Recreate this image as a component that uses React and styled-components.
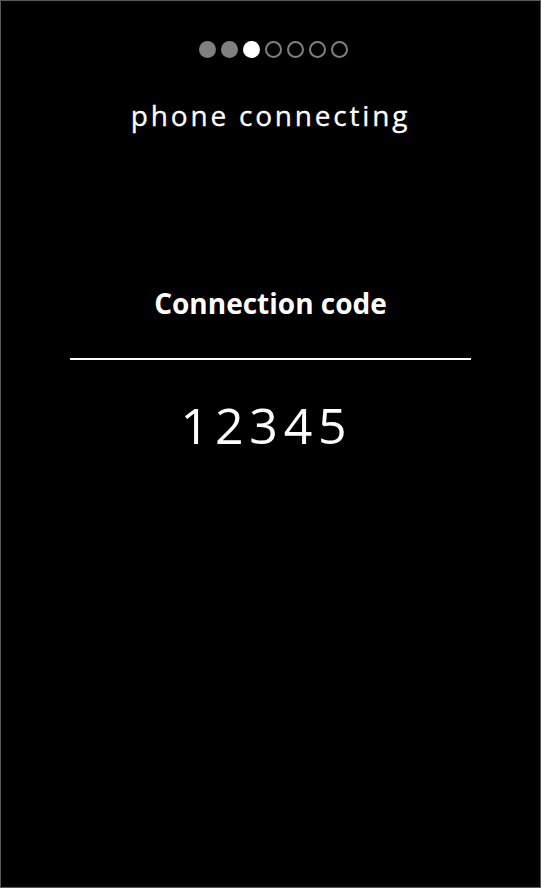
import styled, { createGlobalStyle } from "styled-components";

const GlobalStyle = createGlobalStyle`
  html, body {
    margin: 0;
    padding: 0;
    background: #ffffff;
  }
  body {
    font-family: "Open Sans", "Noto Sans", sans-serif;
  }
`;

const steps = ["done", "done", "current", "todo", "todo", "todo", "todo"];

export default function App() {
  return (
    <>
      <GlobalStyle />
      <Screen>
        <Stepper>
          {steps.map((state, i) => (
            <Dot key={i} state={state} />
          ))}
        </Stepper>
        <Title>phone connecting</Title>
        <CodeSection>
          <CodeLabel>Connection code</CodeLabel>
          <Divider />
          <CodeValue>12345</CodeValue>
        </CodeSection>
      </Screen>
    </>
  );
}

const Screen = styled.main`
  box-sizing: border-box;
  width: 541px;
  height: 888px;
  background: #000000;
  border: 1px solid #5a5a5a;
  display: flex;
  flex-direction: column;
  align-items: center;
  color: #ffffff;
`;

const Stepper = styled.div`
  display: flex;
  gap: 5px;
  margin: 40px 0 0 5px;
`;

const Dot = styled.span`
  box-sizing: border-box;
  width: 17px;
  height: 17px;
  border-radius: 50%;
  background: ${({ state }) =>
    state === "done" ? "#808080" : state === "current" ? "#ffffff" : "transparent"};
  border: ${({ state }) => (state === "todo" ? "2px solid #808080" : "none")};
`;

const Title = styled.h1`
  margin: 39px 0 0 0;
  font-size: 28px;
  font-weight: 400;
  letter-spacing: 2.8px;
  line-height: 36px;
  -webkit-text-stroke: 0.3px #ffffff;
`;

const CodeSection = styled.section`
  margin-top: 152px;
  display: flex;
  flex-direction: column;
  align-items: center;
`;

const CodeLabel = styled.h2`
  margin: 0;
  font-size: 28px;
  font-weight: 700;
  line-height: 36px;
`;

const Divider = styled.hr`
  width: 401px;
  height: 2px;
  margin: 37px 0 0 0;
  border: none;
  background: #ffffff;
`;

const CodeValue = styled.div`
  margin-top: 35px;
  padding-right: 8px;
  font-size: 50px;
  font-weight: 400;
  letter-spacing: 5.8px;
  line-height: 60px;
`;
